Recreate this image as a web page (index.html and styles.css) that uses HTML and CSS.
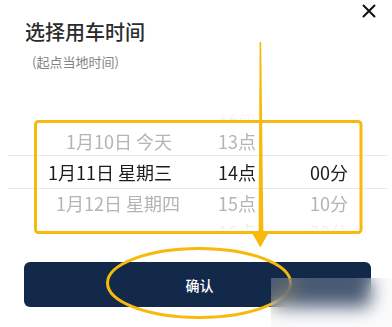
FILE: index.html
```html
<!DOCTYPE html>
<html lang="zh-CN">
<head>
<meta charset="utf-8">
<title>选择用车时间</title>
<link rel="stylesheet" href="styles.css">
</head>
<body>
<div class="sheet">
  <header class="head">
    <h1 class="title">选择用车时间</h1>
    <p class="sub">(起点当地时间)</p>
  </header>

  <div class="picker">
    <div class="row far top"><span></span><span>12点</span><span></span></div>
    <div class="row near"><span>1月10日 今天</span><span>13点</span><span></span></div>
    <div class="row sel"><span>1月11日 星期三</span><span>14点</span><span>00分</span></div>
    <div class="row near below"><span class="shift">1月12日 星期四</span><span>15点</span><span>10分</span></div>
    <div class="row far bottom"><span></span><span>16点</span><span>20分</span></div>
  </div>

  <button class="confirm" type="button">确认</button>

  <button class="close" type="button" aria-label="关闭">
    <svg width="14" height="14" viewBox="0 0 14 14"><path d="M1.5 1.5 L12.5 12.5 M12.5 1.5 L1.5 12.5" stroke="#111" stroke-width="2" stroke-linecap="round"/></svg>
  </button>

  <svg class="marks" width="392" height="327" viewBox="0 0 392 327">
    <rect x="35.5" y="121.5" width="325.5" height="111" rx="3" fill="none" stroke="#f6b90c" stroke-width="3"/>
    <polygon points="259.6,42 261.2,42 263.4,234 258.6,234" fill="#f6b90c"/>
    <polygon points="251.5,232 269,232 260.3,247.5" fill="#f6b90c"/>
    <ellipse cx="199" cy="283" rx="91.5" ry="34.5" fill="none" stroke="#f6b90c" stroke-width="3"/>
  </svg>

  <div class="wm"></div>
</div>
</body>
</html>
```

FILE: styles.css
```css
* { box-sizing: border-box; }
html, body { margin: 0; padding: 0; background: #fff; }
body {
  width: 392px;
  height: 327px;
  overflow: hidden;
  font-family: "Noto Sans CJK SC", "Noto Sans", sans-serif;
}
.sheet {
  position: relative;
  width: 392px;
  height: 327px;
  display: flex;
  flex-direction: column;
}
.head {
  padding: 18px 0 0 25px;
}
.title {
  margin: 0;
  font-size: 20px;
  line-height: 28px;
  font-weight: 500;
  color: #2b2b2b;
}
.sub {
  margin: 7px 0 0 7px;
  font-size: 13px;
  line-height: 18px;
  color: #838383;
}
.picker {
  margin-top: 26px;
  height: 150px;
  -webkit-mask-image: linear-gradient(to bottom, transparent 0, transparent 15px, rgba(0,0,0,0.35) 24px, #000 30px, #000 121px, rgba(0,0,0,0.45) 128px, transparent 135px);
  mask-image: linear-gradient(to bottom, transparent 0, transparent 15px, rgba(0,0,0,0.35) 24px, #000 30px, #000 121px, rgba(0,0,0,0.45) 128px, transparent 135px);
}
.row {
  display: grid;
  grid-template-columns: 172px 84px 92px 1fr;
  height: 28px;
  align-items: center;
  font-size: 18px;
  line-height: 28px;
  color: #b4b4b4;
}
.row.top, .row.bottom { height: 30px; line-height: 30px; }
.row span { text-align: right; white-space: nowrap; }
.row span.shift { transform: translateX(8px); }
.row.far { color: #cfcfcf; }
.row.sel {
  color: #1c1c1c;
  height: 34px;
  margin-left: 8px;
  margin-right: 4px;
  grid-template-columns: 164px 84px 92px 1fr;
  border-top: 1px solid #e9e9e9;
  border-bottom: 1px solid #e9e9e9;
}
.confirm {
  margin: 15px 21px 0 24px;
  height: 45px;
  border: 0;
  border-radius: 6px;
  background: #13294a;
  color: #fff;
  font-family: inherit;
  font-size: 14px;
  font-weight: 500;
  padding: 0 0 0 4px;
}
.close {
  position: absolute;
  left: 362px;
  top: 3px;
  width: 15px;
  height: 15px;
  padding: 0;
  border: 0;
  background: none;
}
.close svg { display: block; }
.marks {
  position: absolute;
  left: 0;
  top: 0;
  pointer-events: none;
}
.wm {
  position: absolute;
  left: 271px;
  top: 278px;
  width: 121px;
  height: 49px;
  background: rgba(238, 239, 242, 0.25);
  backdrop-filter: blur(9px);
  -webkit-backdrop-filter: blur(9px);
}
```
